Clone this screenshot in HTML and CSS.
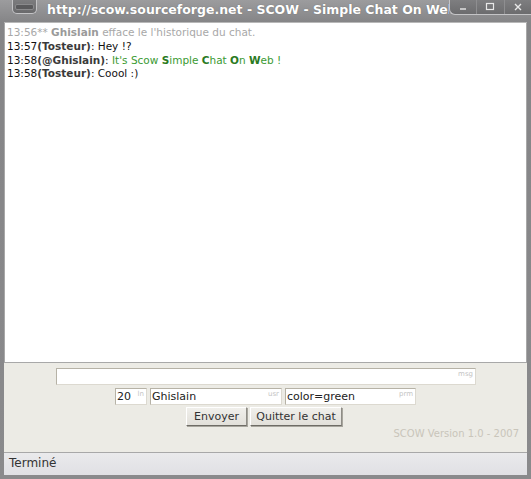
FILE: index.html
```html
<!DOCTYPE html>
<html>
<head>
<meta charset="utf-8">
<link rel="stylesheet" href="styles.css">
</head>
<body>
<div class="window">
  <div class="titlebar">
    <div class="menu-btn"><span class="menu-bar"></span></div>
    <div class="title">http://scow.sourceforge.net - SCOW - Simple Chat On Web</div>
    <div class="controls">
      <span class="ctl"><svg width="10" height="10" viewBox="0 0 10 10"><path d="M2 7h6" stroke="#e8e8e8" stroke-width="1.4"/></svg></span>
      <span class="ctl"><svg width="10" height="10" viewBox="0 0 10 10"><rect x="1.5" y="1.5" width="7" height="6" fill="none" stroke="#e8e8e8" stroke-width="1.2"/></svg></span>
      <span class="ctl"><svg width="10" height="10" viewBox="0 0 10 10"><path d="M2 2l6 6M8 2l-6 6" stroke="#e8e8e8" stroke-width="1.4"/></svg></span>
    </div>
  </div>
  <div class="frame">
    <div class="chat">
      <div class="line sys">13:56** <b>Ghislain</b> efface le l'historique du chat.</div>
      <div class="line">13:57<b>(Tosteur)</b>: Hey !?</div>
      <div class="line">13:58<b>(@Ghislain)</b>: <span class="green">It's Scow <b>S</b>imple <b>C</b>hat <b>O</b>n <b>W</b>eb !</span></div>
      <div class="line">13:58<b>(Tosteur)</b>: Coool :)</div>
    </div>
    <div class="form">
      <div class="field msg"><span class="val"></span><span class="lbl">msg</span></div>
      <div class="row">
        <div class="field ln"><span class="val">20</span><span class="lbl">ln</span></div>
        <div class="field usr"><span class="val">Ghislain</span><span class="lbl">usr</span></div>
        <div class="field prm"><span class="val">color=green</span><span class="lbl">prm</span></div>
      </div>
      <div class="row buttons">
        <button class="btn envoyer">Envoyer</button>
        <button class="btn quitter">Quitter le chat</button>
      </div>
      <div class="version">SCOW Version 1.0 - 2007</div>
    </div>
    <div class="status">Terminé</div>
  </div>
</div>
</body>
</html>
```

FILE: styles.css
```css
html, body {
  margin: 0;
  padding: 0;
}
body {
  width: 531px;
  height: 479px;
  overflow: hidden;
  font-family: "DejaVu Sans", sans-serif;
  background: #8e8e90;
}
.window {
  display: flex;
  flex-direction: column;
  width: 531px;
  height: 479px;
  background: linear-gradient(#9c9c9e, #858587 22px, #8a8a8c);
}
.titlebar {
  display: flex;
  align-items: flex-start;
  height: 20px;
  flex: none;
}
.menu-btn {
  width: 23px;
  height: 13px;
  margin-left: 12px;
  border: 1px solid #c4c4c6;
  border-top: none;
  border-radius: 0 0 5px 5px;
  background: linear-gradient(#7c7c7e, #6a6a6c);
  display: flex;
  align-items: center;
  justify-content: center;
}
.menu-bar {
  display: block;
  width: 17px;
  height: 4px;
  border-radius: 2px;
  background: #5a5a5c;
  border: 1px solid #8a8a8c;
}
.title {
  flex: 1;
  min-width: 0;
  overflow: hidden;
  white-space: nowrap;
  color: #ffffff;
  font-weight: bold;
  font-size: 12.5px;
  line-height: 20px;
  margin-left: 10px;
  text-shadow: 0 0 1px #666;
}
.controls {
  display: flex;
  width: 81px;
  height: 14px;
  border: 1px solid #c4c4c6;
  border-top: none;
  border-right: none;
  border-radius: 0 0 0 6px;
  background: linear-gradient(#7e7e80, #6c6c6e);
  flex: none;
}
.ctl {
  flex: 1;
  display: flex;
  align-items: center;
  justify-content: center;
  border-left: 1px solid #8e8e90;
}
.ctl:first-child { border-left: none; }
.frame {
  flex: 1;
  display: flex;
  flex-direction: column;
  margin: 2px 4px 4px 4px;
  background: #ecebe5;
  border-top: 1px solid #b8b8b8;
}
.chat {
  height: 340px;
  box-sizing: border-box;
  background: #ffffff;
  border: 1px solid #a8a8a8;
  border-top: none;
  padding: 3px 1px 0 2px;
  font-size: 10.5px;
  line-height: 13.8px;
  color: #111;
}
.line b { color: #3a3a3a; }
.line.sys { color: #a8a8a8; }
.line.sys b { color: #9a9a9a; }
.green { color: #3a9a32; }
.green b { color: #2a7a22; }
.form {
  flex: 1;
  display: flex;
  flex-direction: column;
  align-items: center;
  padding-top: 5px;
}
.field {
  display: flex;
  align-items: flex-start;
  justify-content: space-between;
  background: #ffffff;
  border: 1px solid #b6b2a6;
  border-right-color: #dcd9d0;
  border-bottom-color: #dcd9d0;
  box-sizing: border-box;
  height: 17px;
  font-size: 11px;
  color: #222;
}
.field .val {
  line-height: 15px;
  padding-left: 1px;
}
.field .lbl {
  font-size: 7px;
  line-height: 10px;
  color: #c4c4c4;
  padding-right: 2px;
}
.field.msg {
  width: 420px;
  margin-left: 1px;
}
.row {
  display: flex;
  gap: 3px;
  margin-top: 3px;
}
.field.ln { width: 32px; }
.field.usr { width: 132px; }
.field.prm { width: 131px; }
.row.buttons {
  gap: 3px;
  margin-top: 2px;
  margin-right: 3px;
}
.btn {
  font-family: "DejaVu Sans", sans-serif;
  font-size: 11px;
  color: #333;
  height: 19px;
  padding: 0;
  background: linear-gradient(#f0efeb, #e2e0da);
  border: 1px solid #fff;
  border-right-color: #8e8c86;
  border-bottom-color: #6e6c66;
  box-shadow: 1px 1px 0 #a8a69e;
}
.btn.envoyer { width: 61px; }
.btn.quitter { width: 92px; }
.version {
  align-self: flex-end;
  margin-right: 8px;
  margin-top: 2px;
  font-size: 10px;
  color: #c9c5ba;
}
.status {
  height: 22px;
  flex: none;
  border-top: 1px solid #a8a8a8;
  background: linear-gradient(#eaeaec, #e0e0e4);
  font-size: 12px;
  line-height: 21px;
  padding-left: 5px;
  color: #333;
}
```
